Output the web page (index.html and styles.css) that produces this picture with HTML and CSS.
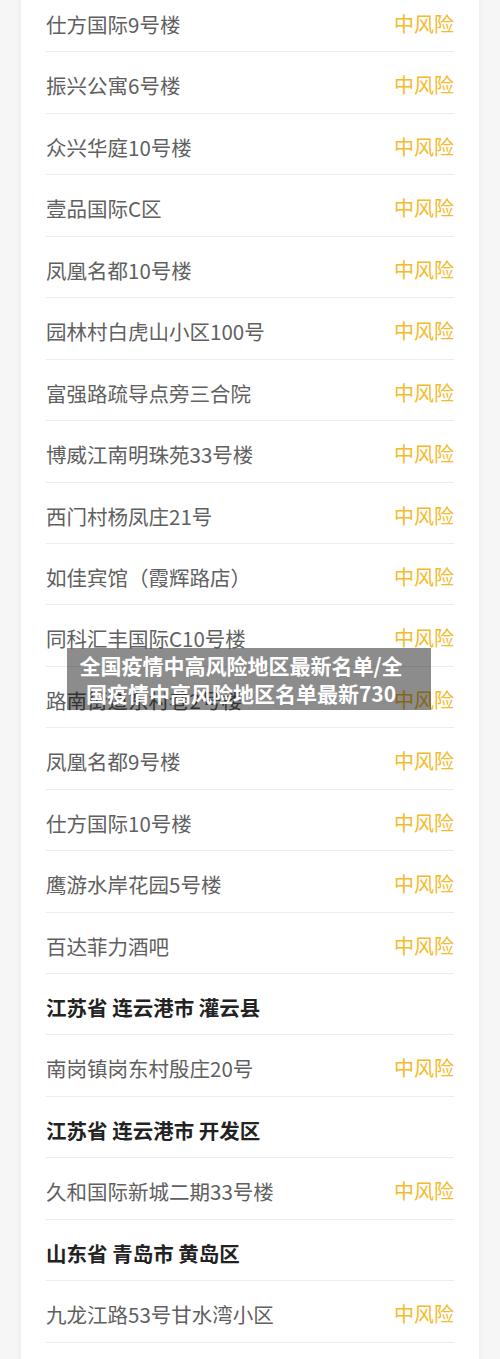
FILE: index.html
```html
<!DOCTYPE html>
<html lang="zh-CN">
<head>
    <meta charset="UTF-8">
    <meta name="viewport" content="width=device-width, initial-scale=1.0">
    <title>全国疫情中高风险地区最新名单</title>
    <link rel="stylesheet" href="styles.css">
</head>
<body>
    <div class="card">
        <ul class="list">
            <li class="row"><span class="place">仕方国际9号楼</span><span class="risk">中风险</span></li>
            <li class="row"><span class="place">振兴公寓6号楼</span><span class="risk">中风险</span></li>
            <li class="row"><span class="place">众兴华庭10号楼</span><span class="risk">中风险</span></li>
            <li class="row"><span class="place">壹品国际C区</span><span class="risk">中风险</span></li>
            <li class="row"><span class="place">凤凰名都10号楼</span><span class="risk">中风险</span></li>
            <li class="row"><span class="place">园林村白虎山小区100号</span><span class="risk">中风险</span></li>
            <li class="row"><span class="place">富强路疏导点旁三合院</span><span class="risk">中风险</span></li>
            <li class="row"><span class="place">博威江南明珠苑33号楼</span><span class="risk">中风险</span></li>
            <li class="row"><span class="place">西门村杨凤庄21号</span><span class="risk">中风险</span></li>
            <li class="row"><span class="place">如佳宾馆（霞辉路店）</span><span class="risk">中风险</span></li>
            <li class="row"><span class="place">同科汇丰国际C10号楼</span><span class="risk">中风险</span></li>
            <li class="row"><span class="place">路南街道东村巷2号楼</span><span class="risk">中风险</span></li>
            <li class="row"><span class="place">凤凰名都9号楼</span><span class="risk">中风险</span></li>
            <li class="row"><span class="place">仕方国际10号楼</span><span class="risk">中风险</span></li>
            <li class="row"><span class="place">鹰游水岸花园5号楼</span><span class="risk">中风险</span></li>
            <li class="row"><span class="place">百达菲力酒吧</span><span class="risk">中风险</span></li>
            <li class="row region">江苏省 连云港市 灌云县</li>
            <li class="row"><span class="place">南岗镇岗东村殷庄20号</span><span class="risk">中风险</span></li>
            <li class="row region">江苏省 连云港市 开发区</li>
            <li class="row"><span class="place">久和国际新城二期33号楼</span><span class="risk">中风险</span></li>
            <li class="row region">山东省 青岛市 黄岛区</li>
            <li class="row"><span class="place">九龙江路53号甘水湾小区</span><span class="risk">中风险</span></li>
            <li class="row"><span class="place">&nbsp;</span></li>
        </ul>
    </div>

    <div class="caption">全国疫情中高风险地区最新名单/全国疫情中高风险地区名单最新730</div>
</body>
</html>
```

FILE: styles.css
```css
body {
    margin: 0;
    background-color: #f6f6f6;
    font-family: "Noto Sans CJK SC", "Noto Sans", sans-serif;
    height: 1359px;
    overflow: hidden;
    position: relative;
}
.card {
    margin: -9px 21px 0;
    background-color: #fff;
    box-shadow: 0 0 6px rgba(0, 0, 0, 0.07);
    padding: 0 25px;
}
.list {
    list-style: none;
    margin: 0;
    padding: 0;
}
.row {
    display: flex;
    justify-content: space-between;
    align-items: center;
    padding: 23px 0 17.45px;
    font-size: 20.5px;
    line-height: 20px;
    border-bottom: 1px solid #ededed;
}
.place {
    color: #606060;
}
.risk {
    color: #f4ba2c;
    font-size: 20px;
}
.region {
    color: #222;
    font-weight: bold;
}
.caption {
    position: absolute;
    top: 648px;
    left: 67px;
    width: 364px;
    padding: 3px 24px 3px 8px;
    box-sizing: border-box;
    background-color: rgba(0, 0, 0, 0.45);
    color: #fff;
    font-size: 21px;
    font-weight: bold;
    line-height: 28px;
    text-align: center;
}
```
